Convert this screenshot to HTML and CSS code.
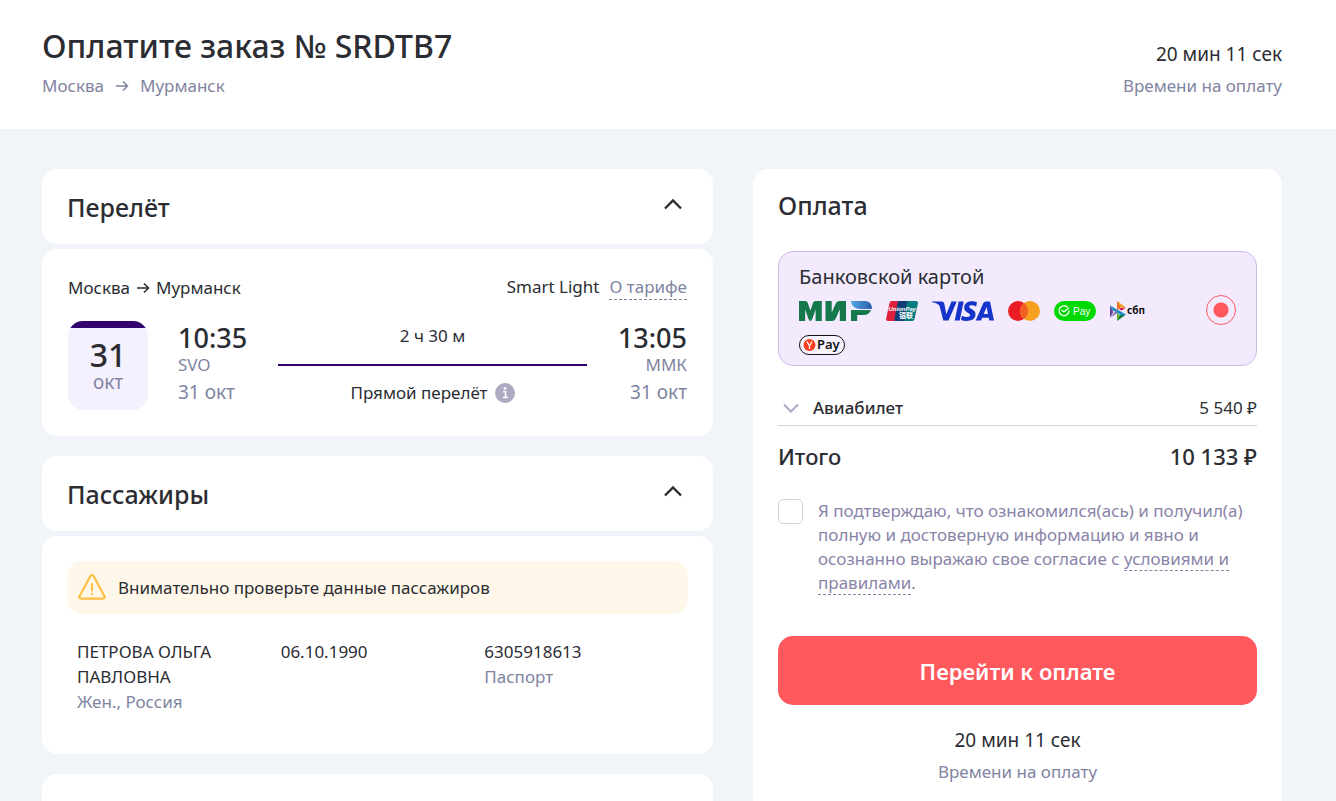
FILE: index.html
```html
<!DOCTYPE html>
<html lang="ru">
<head>
  <meta charset="UTF-8">
  <meta name="viewport" content="width=device-width, initial-scale=1.0">
  <title>Оплата заказа</title>
  <link rel="stylesheet" href="styles.css">
</head>
<body>

  <!-- Header -->
  <header class="page-header">
    <div>
      <h1>Оплатите заказ № SRDTB7</h1>
      <p class="route-line">
        <span>Москва</span>
        <svg class="arrow" width="14" height="12" viewBox="0 0 14 12"><path d="M1 6h11M8 1.5L12.5 6 8 10.5"/></svg>
        <span>Мурманск</span>
      </p>
    </div>
    <div class="timer timer-right">
      <p class="timer-value">20 мин 11 сек</p>
      <p class="timer-label">Времени на оплату</p>
    </div>
  </header>

  <main class="layout">
    <div class="order">

      <!-- Flight -->
      <section class="block">
        <div class="card card-header">
          <h2>Перелёт</h2>
          <button class="toggle" type="button" aria-label="Свернуть">
            <svg width="20" height="12" viewBox="0 0 20 12"><path d="M2 10.5L10 2.5l8 8"/></svg>
          </button>
        </div>
        <div class="card flight">
          <div class="flight-top">
            <p class="flight-route">
              <span>Москва</span>
              <svg class="arrow" width="14" height="12" viewBox="0 0 14 12"><path d="M1 6h11M8 1.5L12.5 6 8 10.5"/></svg>
              <span>Мурманск</span>
            </p>
            <p class="tariff">Smart Light <a class="dashed" href="#">О тарифе</a></p>
          </div>
          <div class="flight-row">
            <div class="date-box">
              <b>31</b>
              <span>окт</span>
            </div>
            <div class="point">
              <p class="time">10:35</p>
              <p class="airport">SVO</p>
              <p class="day">31 окт</p>
            </div>
            <div class="path">
              <p>2 ч 30 м</p>
              <div class="path-line"></div>
              <p class="path-type">Прямой перелёт
                <svg width="20" height="20" viewBox="0 0 20 20"><circle cx="10" cy="10" r="10" fill="#aeaac1"/><circle cx="10" cy="5.5" r="1.4" fill="#fff"/><path d="M8 8.8h2.5V14M8 14.5h5" fill="none" stroke="#fff" stroke-width="1.6"/></svg>
              </p>
            </div>
            <div class="point point-to">
              <p class="time">13:05</p>
              <p class="airport">ММК</p>
              <p class="day">31 окт</p>
            </div>
          </div>
        </div>
      </section>

      <!-- Passengers -->
      <section class="block">
        <div class="card card-header">
          <h2>Пассажиры</h2>
          <button class="toggle" type="button" aria-label="Свернуть">
            <svg width="20" height="12" viewBox="0 0 20 12"><path d="M2 10.5L10 2.5l8 8"/></svg>
          </button>
        </div>
        <div class="card passengers">
          <div class="notice">
            <svg width="28" height="28" viewBox="0 0 28 28" fill="none" stroke="#ffbf43" stroke-width="2.2" stroke-linejoin="round" stroke-linecap="round"><path d="M12.6 1.8L1.5 22.2q-.8 2.3 1.5 2.5h22q2.3-.2 1.500-2.500L15.4 1.800q-1.400-2-2.800 0z"/><path d="M14 10v6.500M14 20.200v.3"/></svg>
            <p>Внимательно проверьте данные пассажиров</p>
          </div>
          <div class="passenger">
            <div>
              <p>ПЕТРОВА ОЛЬГА ПАВЛОВНА</p>
              <p class="muted">Жен., Россия</p>
            </div>
            <p>06.10.1990</p>
            <div>
              <p>6305918613</p>
              <p class="muted">Паспорт</p>
            </div>
          </div>
        </div>
      </section>

      <section class="block">
        <div class="card card-header"></div>
      </section>
    </div>

    <!-- Payment -->
    <aside class="card payment">
      <h2>Оплата</h2>
      <label class="method">
        <span class="method-info">
          <span class="method-title">Банковской картой</span>
          <span class="logos">
            <svg width="73" height="20" viewBox="0 0 73 20">
              <defs><linearGradient id="mir"><stop offset="0" stop-color="#4fa9e6"/><stop offset="1" stop-color="#2a5ba8"/></linearGradient></defs>
              <path fill="#16794b" d="M0 20V0h6.500q1.500 0 2.100 1.600l2.800 8 2.800-8Q14.800 0 16.300 0h6.500v20h-6.200V8.500l-3.300 9.500q-.7 2-1.900 2t-1.900-2L6.200 8.500V20zM26.500 20V0h6.200v11.800L36.500 3Q37.800 0 40.600 0H47v20h-6.200V8.200L37 17q-1.300 3-4.100 3zM52 9h20q-1.800 5-7.500 5h-6.300v6H52z"/>
              <path fill="url(#mir)" d="M51.800 0h14.500Q73 .5 72.900 8H61Q53.500 8 51.800 0z"/>
            </svg>
            <svg width="32" height="20" viewBox="0 0 32 20">
              <path fill="#df1f3c" d="M5.500 0H15l-4 20H2Q-.2 20 .2 17.500L3.500 2Q4 0 5.500 0z"/>
              <path fill="#113f78" d="M13 0h11l-4 20H9.500Q8 20 8.400 18L11.500 2Q12 0 13 0z"/>
              <path fill="#067b80" d="M22 0h8q2.300 0 1.900 2.500l-3.300 15.300Q28 20 26.500 20H17q1 0 1.400-2L21 2q.3-1.700 1-2z"/>
              <text x="2.500" y="10" font-family="Liberation Sans" font-size="6" font-weight="700" font-style="italic" fill="#fff">UnionPay</text>
              <text x="13" y="17" font-family="Noto Sans CJK SC" font-size="7" font-weight="700" fill="#fff">银联</text>
            </svg>
            <svg width="62" height="20" viewBox="0 0 62 20" fill="#1434cb">
              <path d="M0 .4h9.500q2.300 0 2.800 2.300l2 10.500L19.500.4h5.300L16.500 19.600h-5.200L7.500 4.800Q5.500 2 0 1.200z"/>
              <path d="M26.700.4h5l-4 19.200h-5zM45 1.200l-.8 4.200c-3-1.400-7-1.700-7 .4 0 2.200 6.300 2.600 6.300 7.500 0 7-9 7.700-14.500 5.700l.9-4.300c3.300 1.700 8.300 1.900 8.300-.6 0-2.400-6-2.500-6-7.400C32.200.3 40-1 45 1.200z"/>
              <path fill-rule="evenodd" d="M54 .4h4L62 19.600h-4.700l-.6-2.900h-6.500L49 19.600h-5.300l7.500-17.400Q52 .4 54 .4zM54.700 6l-3 7.100H56z"/>
            </svg>
            <svg width="32" height="20" viewBox="0 0 32 20"><circle cx="10" cy="10" r="10" fill="#eb1c26"/><circle cx="22" cy="10" r="10" fill="#f79f1e"/><path fill="#f26122" d="M16 2a10 10 0 0 1 0 16 10 10 0 0 1 0-16z"/></svg>
            <svg width="42" height="20" viewBox="0 0 42 20"><rect width="42" height="20" rx="10" fill="#00d900"/><path d="M13.5 6.200A5 5 0 1 0 15 9.500M7.500 9l2.500 2 5-4.300" fill="none" stroke="#fff" stroke-width="1.300"/><text x="19" y="14" font-family="Liberation Sans" font-size="10" fill="#fff">Pay</text></svg>
            <svg width="35" height="20" viewBox="0 0 35 20">
              <path fill="#654595" d="M0 4.500l3 5.200v2L0 16.500z"/><path fill="#d90751" d="M16 6.500l-4.500 3L8 7.500z"/><path fill="#f59b22" d="M7 0l9 6.500H11L7 9z"/><path fill="#e96c2c" d="M7 0l3 5.500L7 9z"/><path fill="#63b22f" d="M7 20v-8l4 2.500z"/><path fill="#0a7b3c" d="M7 20l3.500-6.500H16z"/><path fill="#1489c9" d="M0 4.500l16 9-4.700.500L3 9.500z"/><path fill="#8d75b2" d="M0 16.500l7-8v4z"/>
              <text x="17" y="13" font-family="Noto Sans" font-size="10" font-weight="700" fill="#111">сбп</text>
            </svg>
            <svg width="46" height="20" viewBox="0 0 46 20"><rect x=".5" y=".5" width="45" height="19" rx="9.5" fill="#fff" fill-opacity=".4" stroke="#111"/><circle cx="10.500" cy="10" r="6" fill="#fc3f1d"/><path d="M8 6.500l2.500 4.500L13 6.500M10.500 10.500V14" fill="none" stroke="#fff" stroke-width="1.300"/><text x="18" y="14" font-family="Noto Sans" font-size="13" font-weight="600" fill="#111">Pay</text></svg>
          </span>
        </span>
        <input type="radio" name="method" checked>
      </label>

      <div class="price-row">
        <button class="price-toggle" type="button">
          <svg width="16" height="10" viewBox="0 0 16 10"><path d="M1 1.500l7 7 7-7"/></svg>
          Авиабилет
        </button>
        <span>5 540 ₽</span>
      </div>
      <div class="total">
        <span>Итого</span>
        <span>10 133 ₽</span>
      </div>

      <div class="agree">
        <input type="checkbox" id="agree">
        <label for="agree">Я подтверждаю, что ознакомился(ась) и получил(а) полную и достоверную информацию и явно и осознанно выражаю свое согласие с <a class="dashed" href="#">условиями и правилами</a>.</label>
      </div>

      <button class="pay-btn" type="button">Перейти к оплате</button>
      <div class="timer timer-center">
        <p class="timer-value">20 мин 11 сек</p>
        <p class="timer-label">Времени на оплату</p>
      </div>
    </aside>
  </main>

</body>
</html>
```
FILE: styles.css
```css
* {
  margin: 0;
  padding: 0;
  box-sizing: border-box;
}

body {
  height: 100vh;
  overflow: hidden;
  font-family: "Noto Sans", sans-serif;
  font-size: 17px;
  line-height: 24px;
  background-color: #f1f5fa;
  color: #2b2d33;
}

button,
input {
  font: inherit;
  color: inherit;
}

button {
  border: none;
  background: none;
  cursor: pointer;
}

svg {
  flex: none;
}

/* Header */
.page-header {
  display: flex;
  justify-content: space-between;
  align-items: flex-end;
  padding: 22px 54px 31px 42px;
  background-color: #fff;
}

h1 {
  font-size: 32px;
  font-weight: 500;
  line-height: 48px;
  margin-bottom: 4px;
}

.route-line {
  display: flex;
  align-items: center;
  gap: 11px;
  color: #8184a1;
}

.arrow {
  fill: none;
  stroke: currentColor;
  stroke-width: 1.5;
}

.timer-value {
  font-size: 19px;
  margin-bottom: 8px;
}

.timer-label {
  color: #8184a1;
}

.timer-right {
  text-align: right;
}

.timer-center {
  text-align: center;
}

/* Layout */
.layout {
  display: grid;
  grid-template-columns: 671fr 529fr;
  align-items: start;
  gap: 40px;
  padding: 40px 54px 40px 42px;
}

.block {
  display: flex;
  flex-direction: column;
  gap: 5px;
  margin-bottom: 20px;
}

.card {
  background-color: #fff;
  border-radius: 15px;
}

.card-header {
  display: flex;
  justify-content: space-between;
  align-items: center;
  min-height: 75px;
  padding: 0 30px 0 25px;
}

h2 {
  font-size: 25px;
  font-weight: 500;
  line-height: 32px;
}

.toggle {
  display: flex;
  padding-bottom: 5px;
}

.toggle svg {
  fill: none;
  stroke: #2b2d33;
  stroke-width: 2.4;
}

/* Flight */
.flight {
  padding: 26px;
}

.flight-top {
  display: flex;
  justify-content: space-between;
  margin-bottom: 21px;
}

.flight-route {
  display: flex;
  align-items: center;
  gap: 6px;
}

.tariff {
  display: flex;
  gap: 10px;
}

.dashed {
  color: #8184a1;
  text-decoration: none;
  border-bottom: 1px dashed currentColor;
}

.flight-row {
  display: flex;
}

.date-box {
  display: flex;
  flex-direction: column;
  align-items: center;
  width: 80px;
  height: 89px;
  padding-top: 19px;
  margin-right: 30px;
  border-radius: 15px;
  background: linear-gradient(#33006f 7px, #f5f0fd 7px);
}

.date-box b {
  font-size: 32px;
  font-weight: 500;
  line-height: 30px;
}

.date-box span {
  font-size: 19px;
  color: #8184a1;
}

.point {
  width: 70px;
  padding-top: 2px;
  color: #8184a1;
}

.point-to {
  text-align: right;
}

.time {
  font-size: 27px;
  font-weight: 500;
  line-height: 30px;
  color: #2b2d33;
}

.airport {
  margin-bottom: 3px;
}

.day {
  font-size: 19px;
}

.path {
  flex: 1;
  padding-top: 3px;
  margin: 0 30px;
  text-align: center;
}

.path-line {
  height: 2px;
  margin: 16px 0 15px;
  background-color: #33006f;
}

.path-type {
  display: flex;
  justify-content: center;
  align-items: center;
  gap: 7px;
}

/* Passengers */
.passengers {
  padding: 25px 25px 40px;
}

.notice {
  display: flex;
  align-items: center;
  gap: 12px;
  min-height: 53px;
  padding: 0 11px;
  margin-bottom: 25px;
  border-radius: 15px;
  background-color: #fff8ea;
}

.passenger {
  display: grid;
  grid-template-columns: repeat(3, 1fr);
  padding-left: 10px;
  line-height: 25px;
}

.passenger > div:first-child {
  padding-right: 40px;
}

.muted {
  color: #8184a1;
}

/* Payment */
.payment {
  padding: 20px 25px 40px;
}

.method {
  display: flex;
  align-items: center;
  gap: 14px;
  padding: 13px 20px 10px;
  margin: 30px 0;
  border: 1px solid #cdb9ea;
  border-radius: 15px;
  background-color: #f3ebfd;
  cursor: pointer;
}

.method-info {
  flex: 1;
}

.method-title {
  display: block;
  font-size: 20px;
  margin-bottom: 12px;
}

.logos {
  display: flex;
  flex-wrap: wrap;
  gap: 14px;
}

.method input {
  appearance: none;
  width: 30px;
  height: 30px;
  border: 1px solid #ff585d;
  border-radius: 50%;
  background: radial-gradient(#ff585d 7px, transparent 8px);
}

.price-row {
  display: flex;
  justify-content: space-between;
  padding-bottom: 5px;
  border-bottom: 1px solid #d3d3de;
}

.price-toggle {
  display: flex;
  align-items: center;
  gap: 14px;
  padding-left: 5px;
  font-weight: 500;
}

.price-toggle svg {
  fill: none;
  stroke: #aeaac1;
  stroke-width: 2;
}

.total {
  display: flex;
  justify-content: space-between;
  margin: 14px 0 27px;
  font-size: 22px;
  font-weight: 500;
  line-height: 32px;
}

.agree {
  display: flex;
  gap: 15px;
  margin-bottom: 41px;
  color: #8a84a9;
}

.agree input {
  appearance: none;
  flex: none;
  width: 25px;
  height: 25px;
  border: 1px solid #d3d3de;
  border-radius: 5px;
}

.agree .dashed {
  color: inherit;
}

.pay-btn {
  width: 100%;
  height: 69px;
  margin-bottom: 23px;
  border-radius: 15px;
  background-color: #ff585d;
  color: #fff;
  font-size: 22px;
  font-weight: 600;
}

.pay-btn:hover {
  background-color: #f04a50;
}
```
